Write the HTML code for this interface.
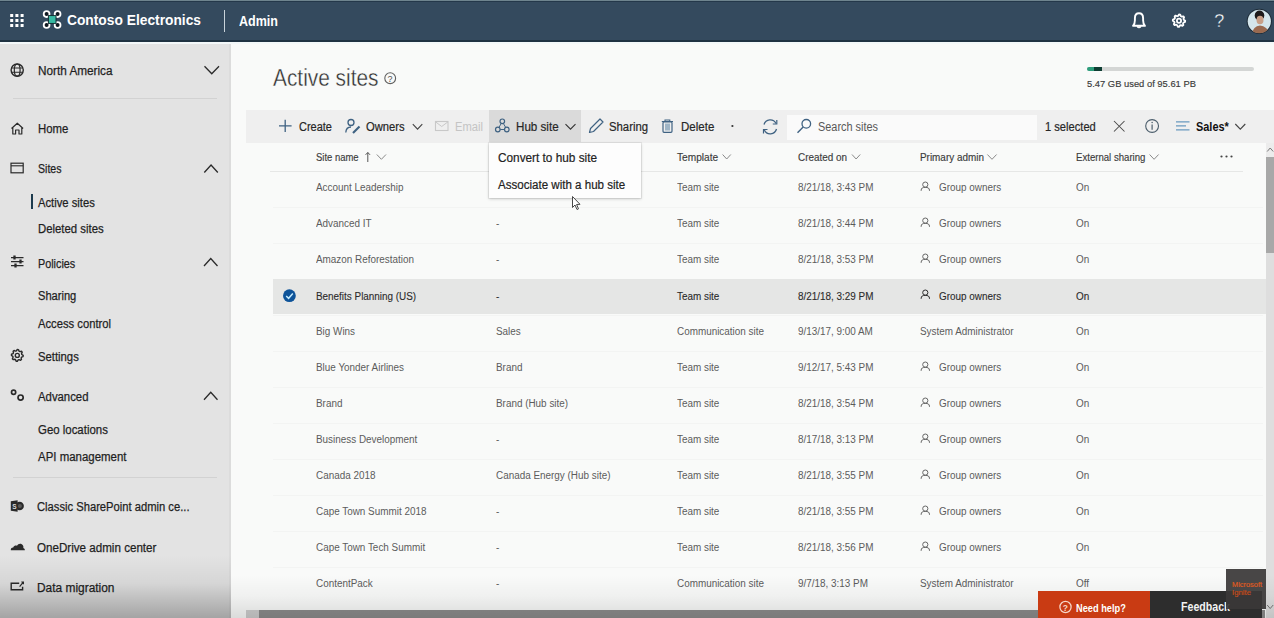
<!DOCTYPE html>
<html><head><meta charset="utf-8">
<style>
*{box-sizing:border-box;margin:0;padding:0}
html,body{width:1274px;height:618px;overflow:hidden;background:#f9faf9;font-family:"Liberation Sans",sans-serif}
body{position:relative}
.b{position:absolute}
.t{position:absolute;white-space:nowrap;line-height:1;z-index:6}
svg.ic{position:absolute;left:0;top:0;z-index:5;overflow:visible}
</style></head><body>
<!-- header -->
<div class=b style="left:0;top:0;width:1274px;height:42px;background:#344a5e"></div>
<div class=b style="left:0;top:0;width:1274px;height:1px;background:#6e848e"></div>
<div class=b style="left:0;top:1px;width:1274px;height:1px;background:#24384a"></div>
<div class=b style="left:0;top:40px;width:1274px;height:2px;background:#1f3242"></div>
<div class=b style="left:0;top:42px;width:1274px;height:2px;background:#f3f8f9;z-index:1"></div>
<div class=b style="left:224px;top:10px;width:1px;height:22px;background:#c9d3da"></div>
<!-- sidebar -->
<div class=b style="left:0;top:43px;width:231px;height:575px;background:#e3e3e3"></div><div class=b style="left:228.5px;top:44px;width:2px;height:574px;background:#dcdcdc"></div>
<div class=b style="left:13px;top:98px;width:204px;height:1px;background:#d2d2d2"></div>
<div class=b style="left:13px;top:477px;width:204px;height:1px;background:#d2d2d2"></div>
<div class=b style="left:30.5px;top:194px;width:2px;height:15px;background:#1c3b4e"></div>
<!-- storage bar -->
<div class=b style="left:1087px;top:67px;width:167px;height:4px;background:#d4d6d5;border-radius:2px"></div>
<div class=b style="left:1087px;top:67px;width:8px;height:4px;background:#2e9e7c;border-radius:2px 0 0 2px"></div>
<div class=b style="left:1094px;top:67px;width:8px;height:4px;background:#0e3d33"></div>
<!-- toolbar -->
<div class=b style="left:246px;top:110px;width:1028px;height:33px;background:#efefef"></div>
<div class=b style="left:489px;top:110px;width:92px;height:32px;background:#dadada"></div>
<div class=b style="left:787px;top:115px;width:250px;height:25px;background:#fafafa"></div>
<!-- table -->
<div class=b style="left:270px;top:170.5px;width:973px;height:1px;background:#e6e7e6"></div>
<div class=b style="left:273px;top:206.5px;width:990px;height:1px;background:#f3f4f3"></div><div class=b style="left:273px;top:242.5px;width:990px;height:1px;background:#f3f4f3"></div><div class=b style="left:273px;top:278.5px;width:990px;height:1px;background:#f3f4f3"></div><div class=b style="left:273px;top:314.5px;width:990px;height:1px;background:#f3f4f3"></div><div class=b style="left:273px;top:350.5px;width:990px;height:1px;background:#f3f4f3"></div><div class=b style="left:273px;top:386.5px;width:990px;height:1px;background:#f3f4f3"></div><div class=b style="left:273px;top:422.5px;width:990px;height:1px;background:#f3f4f3"></div><div class=b style="left:273px;top:458.5px;width:990px;height:1px;background:#f3f4f3"></div><div class=b style="left:273px;top:494.5px;width:990px;height:1px;background:#f3f4f3"></div><div class=b style="left:273px;top:530.5px;width:990px;height:1px;background:#f3f4f3"></div><div class=b style="left:273px;top:566.5px;width:990px;height:1px;background:#f3f4f3"></div>
<div class=b style="left:273px;top:279px;width:993px;height:35px;background:#e5e6e5"></div>
<!-- dropdown -->
<div class=b style="left:489px;top:143px;width:152px;height:55px;background:#fdfdfd;box-shadow:0 0 0 1px rgba(0,0,0,0.06),0 1px 3px rgba(0,0,0,0.2);z-index:4"></div>
<!-- scrollbars -->
<div class=b style="left:1266px;top:143px;width:8px;height:475px;background:#dedede"></div><div class=b style="left:1266px;top:143px;width:8px;height:14px;background:#ececec"></div>
<div class=b style="left:1266px;top:157px;width:8px;height:96px;background:#a8a8a8"></div>
<div class=b style="left:246px;top:610px;width:1019px;height:8px;background:#8c8c8c;z-index:7"></div>
<div class=b style="left:246px;top:610px;width:13px;height:8px;background:#cdcdcd;z-index:7"></div>
<!-- vignette -->
<div class=b style="left:0;top:555px;width:231px;height:63px;background:linear-gradient(to bottom,rgba(0,0,0,0) 0%,rgba(0,0,0,0.06) 45%,rgba(0,0,0,0.28) 100%);z-index:7"></div>
<div class=b style="left:231px;top:575px;width:1043px;height:43px;background:linear-gradient(to bottom,rgba(0,0,0,0) 0%,rgba(0,0,0,0.04) 50%,rgba(0,0,0,0.12) 100%);z-index:7"></div>
<!-- bottom buttons -->
<div class=b style="left:1038px;top:591px;width:112px;height:27px;background:#c93b13;z-index:8"></div>
<div class=b style="left:1150px;top:591px;width:112px;height:27px;background:#2d2d2d;z-index:8"></div>
<div class=b style="left:1226px;top:569px;width:40px;height:40px;background:rgba(58,56,56,0.93);z-index:10"></div>
<svg class=ic width="1274" height="618"><rect x="10.2" y="14.0" width="3" height="3" fill="#ffffff"/><rect x="15.399999999999999" y="14.0" width="3" height="3" fill="#ffffff"/><rect x="20.6" y="14.0" width="3" height="3" fill="#ffffff"/><rect x="10.2" y="19.0" width="3" height="3" fill="#ffffff"/><rect x="15.399999999999999" y="19.0" width="3" height="3" fill="#ffffff"/><rect x="20.6" y="19.0" width="3" height="3" fill="#ffffff"/><rect x="10.2" y="24.0" width="3" height="3" fill="#ffffff"/><rect x="15.399999999999999" y="24.0" width="3" height="3" fill="#ffffff"/><rect x="20.6" y="24.0" width="3" height="3" fill="#ffffff"/><circle cx="46.6" cy="14.1" r="2.9" fill="#0f1820" stroke="#ffffff" stroke-width="1.8"/><circle cx="57.6" cy="14.1" r="2.9" fill="#0f1820" stroke="#ffffff" stroke-width="1.8"/><circle cx="46.6" cy="25.0" r="2.9" fill="#0f1820" stroke="#ffffff" stroke-width="1.8"/><circle cx="57.6" cy="25.0" r="2.9" fill="#0f1820" stroke="#ffffff" stroke-width="1.8"/><rect x="48.4" y="15.6" width="7.6" height="7.8" fill="#38b9a2" stroke="#10282c" stroke-width="0.9"/><path d="M1133,25.8 C1134.6,24.2 1134.9,22.6 1134.9,20.2 L1134.9,18.2 C1134.9,15 1136.7,13.3 1139,13.3 C1141.3,13.3 1143.1,15 1143.1,18.2 L1143.1,20.2 C1143.1,22.6 1143.4,24.2 1145,25.8 Z" fill="none" stroke="#fff" stroke-width="1.9" stroke-linejoin="round"/><path d="M1137,26.3 Q1139,29.2 1141,26.3" fill="#fff" stroke="#fff" stroke-width="1.2"/><polygon points="1185.20,20.70 1185.08,21.91 1183.47,22.55 1183.02,23.39 1183.38,25.08 1182.44,25.86 1180.85,25.17 1179.94,25.44 1179.00,26.90 1177.79,26.78 1177.15,25.17 1176.31,24.72 1174.62,25.08 1173.84,24.14 1174.53,22.55 1174.26,21.64 1172.80,20.70 1172.92,19.49 1174.53,18.85 1174.98,18.01 1174.62,16.32 1175.56,15.54 1177.15,16.23 1178.06,15.96 1179.00,14.50 1180.21,14.62 1180.85,16.23 1181.69,16.68 1183.38,16.32 1184.16,17.26 1183.47,18.85 1183.74,19.76" fill="none" stroke="#fff" stroke-width="1.8" stroke-linejoin="round"/><circle cx="1179" cy="20.7" r="2.1" fill="none" stroke="#fff" stroke-width="1.8"/><clipPath id="av"><circle cx="1259.3" cy="21.3" r="12"/></clipPath><circle cx="1259.3" cy="21.3" r="12.6" fill="#1c2a36"/><circle cx="1259.3" cy="21.3" r="11.6" fill="#d4e6ec"/><g clip-path="url(#av)"><ellipse cx="1259.5" cy="15.5" rx="4.8" ry="5" fill="#1d1a1a"/><ellipse cx="1260" cy="20" rx="3.5" ry="4.3" fill="#c8a088"/><path d="M1252,34 Q1253,26 1260,25.5 Q1267,26 1270,34 Z" fill="#9a6a50"/></g><circle cx="17.2" cy="70.1" r="6.1" fill="none" stroke="#2a2a2a" stroke-width="1.4"/><ellipse cx="17.2" cy="70.1" rx="2.9" ry="6.1" fill="none" stroke="#2a2a2a" stroke-width="1.2"/><path d="M11.5,68.0 H22.9 M11.5,72.2 H22.9" stroke="#2a2a2a" stroke-width="1.1"/><path d="M11.5,128.5 L17.3,123.2 L23.1,128.5 M12.8,127.5 V134 H15.6 V130 H19 V134 H21.8 V127.5" fill="none" stroke="#2a2a2a" stroke-width="1.2" stroke-linejoin="round"/><rect x="11" y="163.2" width="12.2" height="9.6" fill="none" stroke="#2a2a2a" stroke-width="1.2"/><path d="M11,165.8 H23.2" stroke="#2a2a2a" stroke-width="1.1"/><path d="M11,257.6 H23.5 M11,261.6 H23.5 M11,265.6 H23.5" stroke="#2a2a2a" stroke-width="1.3"/><path d="M14.5,255.6 V259.6 M20.5,259.6 V263.6 M15.5,263.6 V267.6" stroke="#2a2a2a" stroke-width="2.3"/><polygon points="23.20,355.40 23.09,356.55 21.55,357.16 21.13,357.96 21.47,359.57 20.58,360.31 19.06,359.65 18.20,359.91 17.30,361.30 16.15,361.19 15.54,359.65 14.74,359.23 13.13,359.57 12.39,358.68 13.05,357.16 12.79,356.30 11.40,355.40 11.51,354.25 13.05,353.64 13.47,352.84 13.13,351.23 14.02,350.49 15.54,351.15 16.40,350.89 17.30,349.50 18.45,349.61 19.06,351.15 19.86,351.57 21.47,351.23 22.21,352.12 21.55,353.64 21.81,354.50" fill="none" stroke="#2a2a2a" stroke-width="1.4" stroke-linejoin="round"/><circle cx="17.3" cy="355.4" r="2.0" fill="none" stroke="#2a2a2a" stroke-width="1.4"/><circle cx="13.6" cy="392.3" r="2.1" fill="none" stroke="#2a2a2a" stroke-width="1.7"/><circle cx="20.6" cy="397.6" r="2.6" fill="none" stroke="#2a2a2a" stroke-width="1.7"/><circle cx="19.6" cy="506" r="4.3" fill="#2a2a2a"/><circle cx="19.9" cy="506" r="2.0" fill="#5a5a5a"/><path d="M10.8,501.2 L17.6,500.2 L17.6,511.8 L10.8,510.8 Z" fill="#2a2a2a"/><text x="12.3" y="508.9" font-family="Liberation Sans" font-size="6.5" font-weight="700" fill="#d8d8d8">S</text><path d="M10.8,550.2 C10.6,548.6 11.6,547.4 13.2,547.5 C14,545.6 15.8,545.2 17,545.8 C18.2,543.2 21.6,542.8 23,545.6 C23.6,546.8 23.4,547.6 23.3,548 C24.6,548.4 25,549.4 24.8,550.2 Z" fill="#2a2a2a"/><path d="M19.2,583.2 H11.2 V589.8 H22.6 V586.8" fill="none" stroke="#2a2a2a" stroke-width="1.4"/><path d="M19.6,586.6 L22.9,582.6 M21.3,582.0 H23.4 V584.2" fill="none" stroke="#2a2a2a" stroke-width="1.2"/><polyline points="204.5,66.3 211.75,73.8 219.0,66.3" fill="none" stroke="#2a2a2a" stroke-width="1.3"/><polyline points="204.3,172.5 211.05,165 217.8,172.5" fill="none" stroke="#2a2a2a" stroke-width="1.3"/><polyline points="204.0,266.0 210.75,258.5 217.5,266.0" fill="none" stroke="#2a2a2a" stroke-width="1.3"/><polyline points="204.0,399.8 210.75,392.3 217.5,399.8" fill="none" stroke="#2a2a2a" stroke-width="1.3"/><circle cx="390.2" cy="78.2" r="5.4" fill="none" stroke="#606060" stroke-width="1.1"/><text x="387.5" y="81.6" font-family="Liberation Sans" font-size="9" fill="#505050">?</text><path d="M285.2,119.8 V132 M279,125.9 H291.6" stroke="#3f6282" stroke-width="1.3"/><circle cx="351" cy="122.5" r="3" fill="none" stroke="#3f6282" stroke-width="1.3"/><path d="M345.8,132.5 C346,128.5 348,127 351,127" fill="none" stroke="#3f6282" stroke-width="1.3"/><path d="M353,133 L359.5,126.5" stroke="#3f6282" stroke-width="2.2"/><polyline points="412.8,124.2 417.55,129.2 422.3,124.2" fill="none" stroke="#444" stroke-width="1.1"/><rect x="435.5" y="121.5" width="12.5" height="9" fill="none" stroke="#c8c8c8" stroke-width="1.1"/><path d="M435.5,121.8 L441.7,126.5 L448,121.8" fill="none" stroke="#c8c8c8" stroke-width="1"/><circle cx="502.3" cy="121.3" r="2.3" fill="none" stroke="#3f6282" stroke-width="1.2"/><circle cx="497.8" cy="129.5" r="2.3" fill="none" stroke="#3f6282" stroke-width="1.2"/><circle cx="506.8" cy="129.5" r="2.3" fill="none" stroke="#3f6282" stroke-width="1.2"/><path d="M501.2,123.5 L499,127.3 M503.4,123.5 L505.6,127.3 M500.2,129.5 H504.4" stroke="#3f6282" stroke-width="1"/><polyline points="565.5,124.2 570.5,129.2 575.5,124.2" fill="none" stroke="#333" stroke-width="1.1"/><path d="M589.5,132.5 L590.5,128.5 L600,119 L603,122 L593.5,131.5 Z" fill="none" stroke="#3f6282" stroke-width="1.2" stroke-linejoin="round"/><path d="M661.8,121.5 H673 M665,121.5 V120 H669.8 V121.5" fill="none" stroke="#3f6282" stroke-width="1.1"/><rect x="663" y="121.8" width="9" height="10.5" rx="1" fill="none" stroke="#3f6282" stroke-width="1.2"/><rect x="665" y="123.5" width="5" height="7" fill="#9fb5c6"/><circle cx="732.4" cy="126" r="1.1" fill="#333"/><path d="M764,124.5 A6.5,6.5 0 0 1 776,123.5 M776.5,129 A6.5,6.5 0 0 1 764.3,130" fill="none" stroke="#3f6282" stroke-width="1.3"/><path d="M776.8,120 V124 H772.8 M763.5,133.5 V129.5 H767.5" fill="none" stroke="#3f6282" stroke-width="1.2"/><circle cx="806.3" cy="123.8" r="4.3" fill="none" stroke="#3f6282" stroke-width="1.3"/><path d="M803.2,127 L797.5,132.7" stroke="#3f6282" stroke-width="1.4"/><path d="M1114,121 L1124.5,131.5 M1124.5,121 L1114,131.5" stroke="#4a4a4a" stroke-width="1.05"/><circle cx="1152.1" cy="126" r="6.4" fill="none" stroke="#4c5e6c" stroke-width="1.1"/><path d="M1152.1,124.6 V129.8" stroke="#4c5e6c" stroke-width="1.2"/><circle cx="1152.1" cy="122.4" r="0.75" fill="#4c5e6c"/><path d="M1176,121.8 H1189.5 M1176,125.8 H1186 M1176,129.8 H1189.5" stroke="#6a9ac0" stroke-width="1.2"/><polyline points="1235.3,124 1240.3,129.2 1245.3,124" fill="none" stroke="#444" stroke-width="1.1"/><path d="M367.8,152.5 V162 M365.6,154.8 L367.8,152.5 L370,154.8" fill="none" stroke="#555" stroke-width="1"/><polyline points="376.8,154.5 381.40000000000003,159.3 386.0,154.5" fill="none" stroke="#8a8a8a" stroke-width="1"/><polyline points="722.6,154.5 726.7,159.0 730.8000000000001,154.5" fill="none" stroke="#8a8a8a" stroke-width="1"/><polyline points="852,154.5 856.1,159.0 860.2,154.5" fill="none" stroke="#8a8a8a" stroke-width="1"/><polyline points="987.4,154.5 992.0,159.3 996.6,154.5" fill="none" stroke="#8a8a8a" stroke-width="1"/><polyline points="1149.6,154.5 1154.1,159.3 1158.6,154.5" fill="none" stroke="#8a8a8a" stroke-width="1"/><circle cx="1221.5" cy="156.5" r="1.1" fill="#444"/><circle cx="1226.5" cy="156.5" r="1.1" fill="#444"/><circle cx="1231.5" cy="156.5" r="1.1" fill="#444"/><circle cx="289.4" cy="295.7" r="6.4" fill="#0d5399"/><path d="M286.2,296 L288.6,298.3 L292.8,293.6" fill="none" stroke="#c4ecff" stroke-width="1.5"/><path d="M572.5,196.5 L572.5,207.5 L575,205 L577,209.5 L578.5,208.8 L576.6,204.5 L580,204.3 Z" fill="#fff" stroke="#333" stroke-width="0.9" stroke-linejoin="round"/><polyline points="1267.2,151.5 1270.2,148 1273.2,151.5" fill="none" stroke="#777" stroke-width="1"/><polyline points="1267.2,605 1270.2,608.5 1273.2,605" fill="none" stroke="#777" stroke-width="1"/></svg><svg class=ic width="1274" height="618"><circle cx="925.3" cy="184.60000000000002" r="2.6" fill="none" stroke="#666" stroke-width="1.0"/><path d="M921.0999999999999,190.8 C921.0999999999999,187.8 922.8,187.4 925.3,187.4 C927.8,187.4 929.5,187.8 929.5,190.8" fill="none" stroke="#666" stroke-width="1.0"/><circle cx="925.3" cy="220.60000000000002" r="2.6" fill="none" stroke="#666" stroke-width="1.0"/><path d="M921.0999999999999,226.8 C921.0999999999999,223.8 922.8,223.4 925.3,223.4 C927.8,223.4 929.5,223.8 929.5,226.8" fill="none" stroke="#666" stroke-width="1.0"/><circle cx="925.3" cy="256.6" r="2.6" fill="none" stroke="#666" stroke-width="1.0"/><path d="M921.0999999999999,262.8 C921.0999999999999,259.8 922.8,259.40000000000003 925.3,259.40000000000003 C927.8,259.40000000000003 929.5,259.8 929.5,262.8" fill="none" stroke="#666" stroke-width="1.0"/><circle cx="925.3" cy="292.6" r="2.6" fill="none" stroke="#2b2b2b" stroke-width="1.0"/><path d="M921.0999999999999,298.8 C921.0999999999999,295.8 922.8,295.40000000000003 925.3,295.40000000000003 C927.8,295.40000000000003 929.5,295.8 929.5,298.8" fill="none" stroke="#2b2b2b" stroke-width="1.0"/><circle cx="925.3" cy="364.6" r="2.6" fill="none" stroke="#666" stroke-width="1.0"/><path d="M921.0999999999999,370.8 C921.0999999999999,367.8 922.8,367.40000000000003 925.3,367.40000000000003 C927.8,367.40000000000003 929.5,367.8 929.5,370.8" fill="none" stroke="#666" stroke-width="1.0"/><circle cx="925.3" cy="400.6" r="2.6" fill="none" stroke="#666" stroke-width="1.0"/><path d="M921.0999999999999,406.8 C921.0999999999999,403.8 922.8,403.40000000000003 925.3,403.40000000000003 C927.8,403.40000000000003 929.5,403.8 929.5,406.8" fill="none" stroke="#666" stroke-width="1.0"/><circle cx="925.3" cy="436.6" r="2.6" fill="none" stroke="#666" stroke-width="1.0"/><path d="M921.0999999999999,442.8 C921.0999999999999,439.8 922.8,439.40000000000003 925.3,439.40000000000003 C927.8,439.40000000000003 929.5,439.8 929.5,442.8" fill="none" stroke="#666" stroke-width="1.0"/><circle cx="925.3" cy="472.6" r="2.6" fill="none" stroke="#666" stroke-width="1.0"/><path d="M921.0999999999999,478.8 C921.0999999999999,475.8 922.8,475.40000000000003 925.3,475.40000000000003 C927.8,475.40000000000003 929.5,475.8 929.5,478.8" fill="none" stroke="#666" stroke-width="1.0"/><circle cx="925.3" cy="508.6" r="2.6" fill="none" stroke="#666" stroke-width="1.0"/><path d="M921.0999999999999,514.8 C921.0999999999999,511.8 922.8,511.40000000000003 925.3,511.40000000000003 C927.8,511.40000000000003 929.5,511.8 929.5,514.8" fill="none" stroke="#666" stroke-width="1.0"/><circle cx="925.3" cy="544.5999999999999" r="2.6" fill="none" stroke="#666" stroke-width="1.0"/><path d="M921.0999999999999,550.8 C921.0999999999999,547.8 922.8,547.4 925.3,547.4 C927.8,547.4 929.5,547.8 929.5,550.8" fill="none" stroke="#666" stroke-width="1.0"/></svg><svg class=ic style="z-index:9" width="1274" height="618"><circle cx="1065.5" cy="607" r="5.6" fill="none" stroke="#f6d5c6" stroke-width="1.3"/><text x="1062.7" y="610.6" font-family="Liberation Sans" font-size="8.5" font-weight="700" fill="#f6d5c6">?</text></svg>
<span class=t id=t0 style="left:66.5px;top:12.18px;font-size:15.5px;font-weight:700;color:#ffffff;transform:scaleX(0.889);transform-origin:0 0;">Contoso Electronics</span>
<span class=t id=t1 style="left:238.5px;top:13.75px;font-size:14px;font-weight:700;color:#ffffff;transform:scaleX(0.895);transform-origin:0 0;">Admin</span>
<span class=t id=t2 style="left:37.5px;top:64.82px;font-size:12.5px;font-weight:400;color:#1f1f1f;transform:scaleX(0.941);transform-origin:0 0;-webkit-text-stroke:0.25px #1f1f1f;">North America</span>
<span class=t id=t3 style="left:37.5px;top:123.12px;font-size:12.5px;font-weight:400;color:#1f1f1f;transform:scaleX(0.909);transform-origin:0 0;-webkit-text-stroke:0.25px #1f1f1f;">Home</span>
<span class=t id=t4 style="left:37.5px;top:163.32px;font-size:12.5px;font-weight:400;color:#1f1f1f;transform:scaleX(0.845);transform-origin:0 0;-webkit-text-stroke:0.25px #1f1f1f;">Sites</span>
<span class=t id=t5 style="left:37.5px;top:196.92px;font-size:12.5px;font-weight:400;color:#1f1f1f;transform:scaleX(0.898);transform-origin:0 0;-webkit-text-stroke:0.25px #1f1f1f;">Active sites</span>
<span class=t id=t6 style="left:37.5px;top:223.32px;font-size:12.5px;font-weight:400;color:#1f1f1f;transform:scaleX(0.909);transform-origin:0 0;-webkit-text-stroke:0.25px #1f1f1f;">Deleted sites</span>
<span class=t id=t7 style="left:37.5px;top:257.52px;font-size:12.5px;font-weight:400;color:#1f1f1f;transform:scaleX(0.864);transform-origin:0 0;-webkit-text-stroke:0.25px #1f1f1f;">Policies</span>
<span class=t id=t8 style="left:37.5px;top:290.42px;font-size:12.5px;font-weight:400;color:#1f1f1f;transform:scaleX(0.889);transform-origin:0 0;-webkit-text-stroke:0.25px #1f1f1f;">Sharing</span>
<span class=t id=t9 style="left:37.5px;top:317.52px;font-size:12.5px;font-weight:400;color:#1f1f1f;transform:scaleX(0.898);transform-origin:0 0;-webkit-text-stroke:0.25px #1f1f1f;">Access control</span>
<span class=t id=t10 style="left:37.5px;top:350.82px;font-size:12.5px;font-weight:400;color:#1f1f1f;transform:scaleX(0.903);transform-origin:0 0;-webkit-text-stroke:0.25px #1f1f1f;">Settings</span>
<span class=t id=t11 style="left:37.5px;top:390.52px;font-size:12.5px;font-weight:400;color:#1f1f1f;transform:scaleX(0.908);transform-origin:0 0;-webkit-text-stroke:0.25px #1f1f1f;">Advanced</span>
<span class=t id=t12 style="left:37.5px;top:424.12px;font-size:12.5px;font-weight:400;color:#1f1f1f;transform:scaleX(0.914);transform-origin:0 0;-webkit-text-stroke:0.25px #1f1f1f;">Geo locations</span>
<span class=t id=t13 style="left:37.5px;top:451.02px;font-size:12.5px;font-weight:400;color:#1f1f1f;transform:scaleX(0.916);transform-origin:0 0;-webkit-text-stroke:0.25px #1f1f1f;">API management</span>
<span class=t id=t14 style="left:36.8px;top:501.32px;font-size:12.5px;font-weight:400;color:#1f1f1f;transform:scaleX(0.896);transform-origin:0 0;-webkit-text-stroke:0.25px #1f1f1f;">Classic SharePoint admin ce...</span>
<span class=t id=t15 style="left:36.8px;top:541.52px;font-size:12.5px;font-weight:400;color:#1f1f1f;transform:scaleX(0.929);transform-origin:0 0;-webkit-text-stroke:0.25px #1f1f1f;">OneDrive admin center</span>
<span class=t id=t16 style="left:36.8px;top:581.52px;font-size:12.5px;font-weight:400;color:#1f1f1f;transform:scaleX(0.953);transform-origin:0 0;-webkit-text-stroke:0.25px #1f1f1f;">Data migration</span>
<span class=t id=t17 style="left:273.4px;top:66.73px;font-size:23px;font-weight:400;color:#2e2e2e;transform:scaleX(0.907);transform-origin:0 0;-webkit-text-stroke:0.35px #f9faf9;">Active sites</span>
<span class=t id=t18 style="left:1087.0px;top:78.56px;font-size:9.5px;font-weight:400;color:#3a3a3a;transform:scaleX(0.987);transform-origin:0 0;-webkit-text-stroke:0.15px #3a3a3a;">5.47 GB used of 95.61 PB</span>
<span class=t id=t19 style="left:299.4px;top:121.02px;font-size:12.5px;font-weight:400;color:#262626;transform:scaleX(0.879);transform-origin:0 0;-webkit-text-stroke:0.2px #262626;">Create</span>
<span class=t id=t20 style="left:366.4px;top:121.02px;font-size:12.5px;font-weight:400;color:#262626;transform:scaleX(0.896);transform-origin:0 0;-webkit-text-stroke:0.2px #262626;">Owners</span>
<span class=t id=t21 style="left:455.0px;top:121.02px;font-size:12.5px;font-weight:400;color:#c4c4c4;transform:scaleX(0.896);transform-origin:0 0;">Email</span>
<span class=t id=t22 style="left:516.0px;top:121.02px;font-size:12.5px;font-weight:400;color:#262626;transform:scaleX(0.929);transform-origin:0 0;-webkit-text-stroke:0.2px #262626;">Hub site</span>
<span class=t id=t23 style="left:609.0px;top:121.02px;font-size:12.5px;font-weight:400;color:#262626;transform:scaleX(0.905);transform-origin:0 0;-webkit-text-stroke:0.2px #262626;">Sharing</span>
<span class=t id=t24 style="left:681.4px;top:121.02px;font-size:12.5px;font-weight:400;color:#262626;transform:scaleX(0.921);transform-origin:0 0;-webkit-text-stroke:0.2px #262626;">Delete</span>
<span class=t id=t25 style="left:817.6px;top:121.22px;font-size:12.5px;font-weight:400;color:#585858;transform:scaleX(0.872);transform-origin:0 0;">Search sites</span>
<span class=t id=t26 style="left:1045.0px;top:121.02px;font-size:12.5px;font-weight:400;color:#262626;transform:scaleX(0.891);transform-origin:0 0;-webkit-text-stroke:0.2px #262626;">1 selected</span>
<span class=t id=t27 style="left:1195.5px;top:121.02px;font-size:12.5px;font-weight:700;color:#111;transform:scaleX(0.874);transform-origin:0 0;">Sales*</span>
<span class=t id=t28 style="left:498.4px;top:152.42px;font-size:12.5px;font-weight:400;color:#222;transform:scaleX(0.944);transform-origin:0 0;-webkit-text-stroke:0.2px #222;">Convert to hub site</span>
<span class=t id=t29 style="left:498.4px;top:179.12px;font-size:12.5px;font-weight:400;color:#222;transform:scaleX(0.925);transform-origin:0 0;-webkit-text-stroke:0.2px #222;">Associate with a hub site</span>
<span class=t id=t30 style="left:316.2px;top:152.67px;font-size:10.2px;font-weight:400;color:#3c3c3c;transform:scaleX(0.929);transform-origin:0 0;-webkit-text-stroke:0.15px #3c3c3c;">Site name</span>
<span class=t id=t31 style="left:676.5px;top:152.67px;font-size:10.2px;font-weight:400;color:#3c3c3c;transform:scaleX(0.994);transform-origin:0 0;-webkit-text-stroke:0.15px #3c3c3c;">Template</span>
<span class=t id=t32 style="left:798.0px;top:152.67px;font-size:10.2px;font-weight:400;color:#3c3c3c;transform:scaleX(0.972);transform-origin:0 0;-webkit-text-stroke:0.15px #3c3c3c;">Created on</span>
<span class=t id=t33 style="left:920.2px;top:152.67px;font-size:10.2px;font-weight:400;color:#3c3c3c;transform:scaleX(0.973);transform-origin:0 0;-webkit-text-stroke:0.15px #3c3c3c;">Primary admin</span>
<span class=t id=t34 style="left:1075.8px;top:152.67px;font-size:10.2px;font-weight:400;color:#3c3c3c;transform:scaleX(0.943);transform-origin:0 0;-webkit-text-stroke:0.15px #3c3c3c;">External sharing</span>
<span class=t id=t35 style="left:315.8px;top:182.94px;font-size:10px;font-weight:400;color:#5c5c5c;transform:scaleX(0.990);transform-origin:0 0;">Account Leadership</span>
<span class=t id=t36 style="left:676.5px;top:182.94px;font-size:10px;font-weight:400;color:#5c5c5c;transform:scaleX(0.990);transform-origin:0 0;">Team site</span>
<span class=t id=t37 style="left:798.0px;top:182.94px;font-size:10px;font-weight:400;color:#5c5c5c;transform:scaleX(0.990);transform-origin:0 0;">8/21/18, 3:43 PM</span>
<span class=t id=t38 style="left:938.5px;top:182.94px;font-size:10px;font-weight:400;color:#5c5c5c;transform:scaleX(0.990);transform-origin:0 0;">Group owners</span>
<span class=t id=t39 style="left:1075.6px;top:182.94px;font-size:10px;font-weight:400;color:#5c5c5c;transform:scaleX(0.990);transform-origin:0 0;">On</span>
<span class=t id=t40 style="left:315.8px;top:218.94px;font-size:10px;font-weight:400;color:#5c5c5c;transform:scaleX(0.990);transform-origin:0 0;">Advanced IT</span>
<span class=t id=t41 style="left:495.8px;top:218.94px;font-size:10px;font-weight:400;color:#5c5c5c;transform:scaleX(0.990);transform-origin:0 0;">-</span>
<span class=t id=t42 style="left:676.5px;top:218.94px;font-size:10px;font-weight:400;color:#5c5c5c;transform:scaleX(0.990);transform-origin:0 0;">Team site</span>
<span class=t id=t43 style="left:798.0px;top:218.94px;font-size:10px;font-weight:400;color:#5c5c5c;transform:scaleX(0.990);transform-origin:0 0;">8/21/18, 3:44 PM</span>
<span class=t id=t44 style="left:938.5px;top:218.94px;font-size:10px;font-weight:400;color:#5c5c5c;transform:scaleX(0.990);transform-origin:0 0;">Group owners</span>
<span class=t id=t45 style="left:1075.6px;top:218.94px;font-size:10px;font-weight:400;color:#5c5c5c;transform:scaleX(0.990);transform-origin:0 0;">On</span>
<span class=t id=t46 style="left:315.8px;top:254.93px;font-size:10px;font-weight:400;color:#5c5c5c;transform:scaleX(0.990);transform-origin:0 0;">Amazon Reforestation</span>
<span class=t id=t47 style="left:495.8px;top:254.93px;font-size:10px;font-weight:400;color:#5c5c5c;transform:scaleX(0.990);transform-origin:0 0;">-</span>
<span class=t id=t48 style="left:676.5px;top:254.93px;font-size:10px;font-weight:400;color:#5c5c5c;transform:scaleX(0.990);transform-origin:0 0;">Team site</span>
<span class=t id=t49 style="left:798.0px;top:254.93px;font-size:10px;font-weight:400;color:#5c5c5c;transform:scaleX(0.990);transform-origin:0 0;">8/21/18, 3:53 PM</span>
<span class=t id=t50 style="left:938.5px;top:254.93px;font-size:10px;font-weight:400;color:#5c5c5c;transform:scaleX(0.990);transform-origin:0 0;">Group owners</span>
<span class=t id=t51 style="left:1075.6px;top:254.93px;font-size:10px;font-weight:400;color:#5c5c5c;transform:scaleX(0.990);transform-origin:0 0;">On</span>
<span class=t id=t52 style="left:315.8px;top:291.54px;font-size:10px;font-weight:400;color:#2b2b2b;transform:scaleX(0.990);transform-origin:0 0;-webkit-text-stroke:0.1px #2b2b2b;">Benefits Planning (US)</span>
<span class=t id=t53 style="left:495.8px;top:291.54px;font-size:10px;font-weight:400;color:#2b2b2b;transform:scaleX(0.990);transform-origin:0 0;-webkit-text-stroke:0.1px #2b2b2b;">-</span>
<span class=t id=t54 style="left:676.5px;top:291.54px;font-size:10px;font-weight:400;color:#2b2b2b;transform:scaleX(0.990);transform-origin:0 0;-webkit-text-stroke:0.1px #2b2b2b;">Team site</span>
<span class=t id=t55 style="left:798.0px;top:291.54px;font-size:10px;font-weight:400;color:#2b2b2b;transform:scaleX(0.990);transform-origin:0 0;-webkit-text-stroke:0.1px #2b2b2b;">8/21/18, 3:29 PM</span>
<span class=t id=t56 style="left:938.5px;top:291.54px;font-size:10px;font-weight:400;color:#2b2b2b;transform:scaleX(0.990);transform-origin:0 0;-webkit-text-stroke:0.1px #2b2b2b;">Group owners</span>
<span class=t id=t57 style="left:1075.6px;top:291.54px;font-size:10px;font-weight:400;color:#2b2b2b;transform:scaleX(0.990);transform-origin:0 0;-webkit-text-stroke:0.1px #2b2b2b;">On</span>
<span class=t id=t58 style="left:315.8px;top:326.94px;font-size:10px;font-weight:400;color:#5c5c5c;transform:scaleX(0.990);transform-origin:0 0;">Big Wins</span>
<span class=t id=t59 style="left:495.8px;top:326.94px;font-size:10px;font-weight:400;color:#5c5c5c;transform:scaleX(0.990);transform-origin:0 0;">Sales</span>
<span class=t id=t60 style="left:676.5px;top:326.94px;font-size:10px;font-weight:400;color:#5c5c5c;transform:scaleX(0.990);transform-origin:0 0;">Communication site</span>
<span class=t id=t61 style="left:798.0px;top:326.94px;font-size:10px;font-weight:400;color:#5c5c5c;transform:scaleX(0.990);transform-origin:0 0;">9/13/17, 9:00 AM</span>
<span class=t id=t62 style="left:920.0px;top:326.94px;font-size:10px;font-weight:400;color:#5c5c5c;transform:scaleX(0.990);transform-origin:0 0;">System Administrator</span>
<span class=t id=t63 style="left:1075.6px;top:326.94px;font-size:10px;font-weight:400;color:#5c5c5c;transform:scaleX(0.990);transform-origin:0 0;">On</span>
<span class=t id=t64 style="left:315.8px;top:362.94px;font-size:10px;font-weight:400;color:#5c5c5c;transform:scaleX(0.990);transform-origin:0 0;">Blue Yonder Airlines</span>
<span class=t id=t65 style="left:495.8px;top:362.94px;font-size:10px;font-weight:400;color:#5c5c5c;transform:scaleX(0.990);transform-origin:0 0;">Brand</span>
<span class=t id=t66 style="left:676.5px;top:362.94px;font-size:10px;font-weight:400;color:#5c5c5c;transform:scaleX(0.990);transform-origin:0 0;">Team site</span>
<span class=t id=t67 style="left:798.0px;top:362.94px;font-size:10px;font-weight:400;color:#5c5c5c;transform:scaleX(0.990);transform-origin:0 0;">9/12/17, 5:43 PM</span>
<span class=t id=t68 style="left:938.5px;top:362.94px;font-size:10px;font-weight:400;color:#5c5c5c;transform:scaleX(0.990);transform-origin:0 0;">Group owners</span>
<span class=t id=t69 style="left:1075.6px;top:362.94px;font-size:10px;font-weight:400;color:#5c5c5c;transform:scaleX(0.990);transform-origin:0 0;">On</span>
<span class=t id=t70 style="left:315.8px;top:398.94px;font-size:10px;font-weight:400;color:#5c5c5c;transform:scaleX(0.990);transform-origin:0 0;">Brand</span>
<span class=t id=t71 style="left:495.8px;top:398.94px;font-size:10px;font-weight:400;color:#5c5c5c;transform:scaleX(0.990);transform-origin:0 0;">Brand (Hub site)</span>
<span class=t id=t72 style="left:676.5px;top:398.94px;font-size:10px;font-weight:400;color:#5c5c5c;transform:scaleX(0.990);transform-origin:0 0;">Team site</span>
<span class=t id=t73 style="left:798.0px;top:398.94px;font-size:10px;font-weight:400;color:#5c5c5c;transform:scaleX(0.990);transform-origin:0 0;">8/21/18, 3:54 PM</span>
<span class=t id=t74 style="left:938.5px;top:398.94px;font-size:10px;font-weight:400;color:#5c5c5c;transform:scaleX(0.990);transform-origin:0 0;">Group owners</span>
<span class=t id=t75 style="left:1075.6px;top:398.94px;font-size:10px;font-weight:400;color:#5c5c5c;transform:scaleX(0.990);transform-origin:0 0;">On</span>
<span class=t id=t76 style="left:315.8px;top:434.94px;font-size:10px;font-weight:400;color:#5c5c5c;transform:scaleX(0.990);transform-origin:0 0;">Business Development</span>
<span class=t id=t77 style="left:495.8px;top:434.94px;font-size:10px;font-weight:400;color:#5c5c5c;transform:scaleX(0.990);transform-origin:0 0;">-</span>
<span class=t id=t78 style="left:676.5px;top:434.94px;font-size:10px;font-weight:400;color:#5c5c5c;transform:scaleX(0.990);transform-origin:0 0;">Team site</span>
<span class=t id=t79 style="left:798.0px;top:434.94px;font-size:10px;font-weight:400;color:#5c5c5c;transform:scaleX(0.990);transform-origin:0 0;">8/17/18, 3:13 PM</span>
<span class=t id=t80 style="left:938.5px;top:434.94px;font-size:10px;font-weight:400;color:#5c5c5c;transform:scaleX(0.990);transform-origin:0 0;">Group owners</span>
<span class=t id=t81 style="left:1075.6px;top:434.94px;font-size:10px;font-weight:400;color:#5c5c5c;transform:scaleX(0.990);transform-origin:0 0;">On</span>
<span class=t id=t82 style="left:315.8px;top:470.94px;font-size:10px;font-weight:400;color:#5c5c5c;transform:scaleX(0.990);transform-origin:0 0;">Canada 2018</span>
<span class=t id=t83 style="left:495.8px;top:470.94px;font-size:10px;font-weight:400;color:#5c5c5c;transform:scaleX(0.990);transform-origin:0 0;">Canada Energy (Hub site)</span>
<span class=t id=t84 style="left:676.5px;top:470.94px;font-size:10px;font-weight:400;color:#5c5c5c;transform:scaleX(0.990);transform-origin:0 0;">Team site</span>
<span class=t id=t85 style="left:798.0px;top:470.94px;font-size:10px;font-weight:400;color:#5c5c5c;transform:scaleX(0.990);transform-origin:0 0;">8/21/18, 3:55 PM</span>
<span class=t id=t86 style="left:938.5px;top:470.94px;font-size:10px;font-weight:400;color:#5c5c5c;transform:scaleX(0.990);transform-origin:0 0;">Group owners</span>
<span class=t id=t87 style="left:1075.6px;top:470.94px;font-size:10px;font-weight:400;color:#5c5c5c;transform:scaleX(0.990);transform-origin:0 0;">On</span>
<span class=t id=t88 style="left:315.8px;top:506.94px;font-size:10px;font-weight:400;color:#5c5c5c;transform:scaleX(0.990);transform-origin:0 0;">Cape Town Summit 2018</span>
<span class=t id=t89 style="left:495.8px;top:506.94px;font-size:10px;font-weight:400;color:#5c5c5c;transform:scaleX(0.990);transform-origin:0 0;">-</span>
<span class=t id=t90 style="left:676.5px;top:506.94px;font-size:10px;font-weight:400;color:#5c5c5c;transform:scaleX(0.990);transform-origin:0 0;">Team site</span>
<span class=t id=t91 style="left:798.0px;top:506.94px;font-size:10px;font-weight:400;color:#5c5c5c;transform:scaleX(0.990);transform-origin:0 0;">8/21/18, 3:55 PM</span>
<span class=t id=t92 style="left:938.5px;top:506.94px;font-size:10px;font-weight:400;color:#5c5c5c;transform:scaleX(0.990);transform-origin:0 0;">Group owners</span>
<span class=t id=t93 style="left:1075.6px;top:506.94px;font-size:10px;font-weight:400;color:#5c5c5c;transform:scaleX(0.990);transform-origin:0 0;">On</span>
<span class=t id=t94 style="left:315.8px;top:542.93px;font-size:10px;font-weight:400;color:#5c5c5c;transform:scaleX(0.990);transform-origin:0 0;">Cape Town Tech Summit</span>
<span class=t id=t95 style="left:495.8px;top:542.93px;font-size:10px;font-weight:400;color:#5c5c5c;transform:scaleX(0.990);transform-origin:0 0;">-</span>
<span class=t id=t96 style="left:676.5px;top:542.93px;font-size:10px;font-weight:400;color:#5c5c5c;transform:scaleX(0.990);transform-origin:0 0;">Team site</span>
<span class=t id=t97 style="left:798.0px;top:542.93px;font-size:10px;font-weight:400;color:#5c5c5c;transform:scaleX(0.990);transform-origin:0 0;">8/21/18, 3:56 PM</span>
<span class=t id=t98 style="left:938.5px;top:542.93px;font-size:10px;font-weight:400;color:#5c5c5c;transform:scaleX(0.990);transform-origin:0 0;">Group owners</span>
<span class=t id=t99 style="left:1075.6px;top:542.93px;font-size:10px;font-weight:400;color:#5c5c5c;transform:scaleX(0.990);transform-origin:0 0;">On</span>
<span class=t id=t100 style="left:315.8px;top:578.93px;font-size:10px;font-weight:400;color:#5c5c5c;transform:scaleX(0.990);transform-origin:0 0;">ContentPack</span>
<span class=t id=t101 style="left:495.8px;top:578.93px;font-size:10px;font-weight:400;color:#5c5c5c;transform:scaleX(0.990);transform-origin:0 0;">-</span>
<span class=t id=t102 style="left:676.5px;top:578.93px;font-size:10px;font-weight:400;color:#5c5c5c;transform:scaleX(0.990);transform-origin:0 0;">Communication site</span>
<span class=t id=t103 style="left:798.0px;top:578.93px;font-size:10px;font-weight:400;color:#5c5c5c;transform:scaleX(0.990);transform-origin:0 0;">9/7/18, 3:13 PM</span>
<span class=t id=t104 style="left:920.0px;top:578.93px;font-size:10px;font-weight:400;color:#5c5c5c;transform:scaleX(0.990);transform-origin:0 0;">System Administrator</span>
<span class=t id=t105 style="left:1075.6px;top:578.93px;font-size:10px;font-weight:400;color:#5c5c5c;transform:scaleX(0.990);transform-origin:0 0;">Off</span>
<span class=t id=t106 style="left:1076.0px;top:602.67px;font-size:11.5px;font-weight:700;color:#ffffff;transform:scaleX(0.803);transform-origin:0 0;z-index:9">Need help?</span>
<span class=t id=t107 style="left:1181.3px;top:601.42px;font-size:12.5px;font-weight:700;color:#f2f2f2;transform:scaleX(0.850);transform-origin:0 0;z-index:9">Feedback</span>
<span class=t id=t108 style="left:1231.5px;top:581.37px;font-size:7px;font-weight:400;color:#de5a22;transform:scaleX(1.056);transform-origin:0 0;z-index:11;-webkit-text-stroke:0.2px #de5a22;">Microsoft</span>
<span class=t id=t109 style="left:1231.5px;top:589.27px;font-size:7px;font-weight:400;color:#c24c1c;transform:scaleX(1.109);transform-origin:0 0;z-index:11;-webkit-text-stroke:0.2px #c24c1c;">Ignite</span>
<span class=t id=t110 style="left:1214.3px;top:12.36px;font-size:18px;font-weight:400;color:#ffffff;-webkit-text-stroke:0.3px #344a5e;">?</span>
</body></html>
